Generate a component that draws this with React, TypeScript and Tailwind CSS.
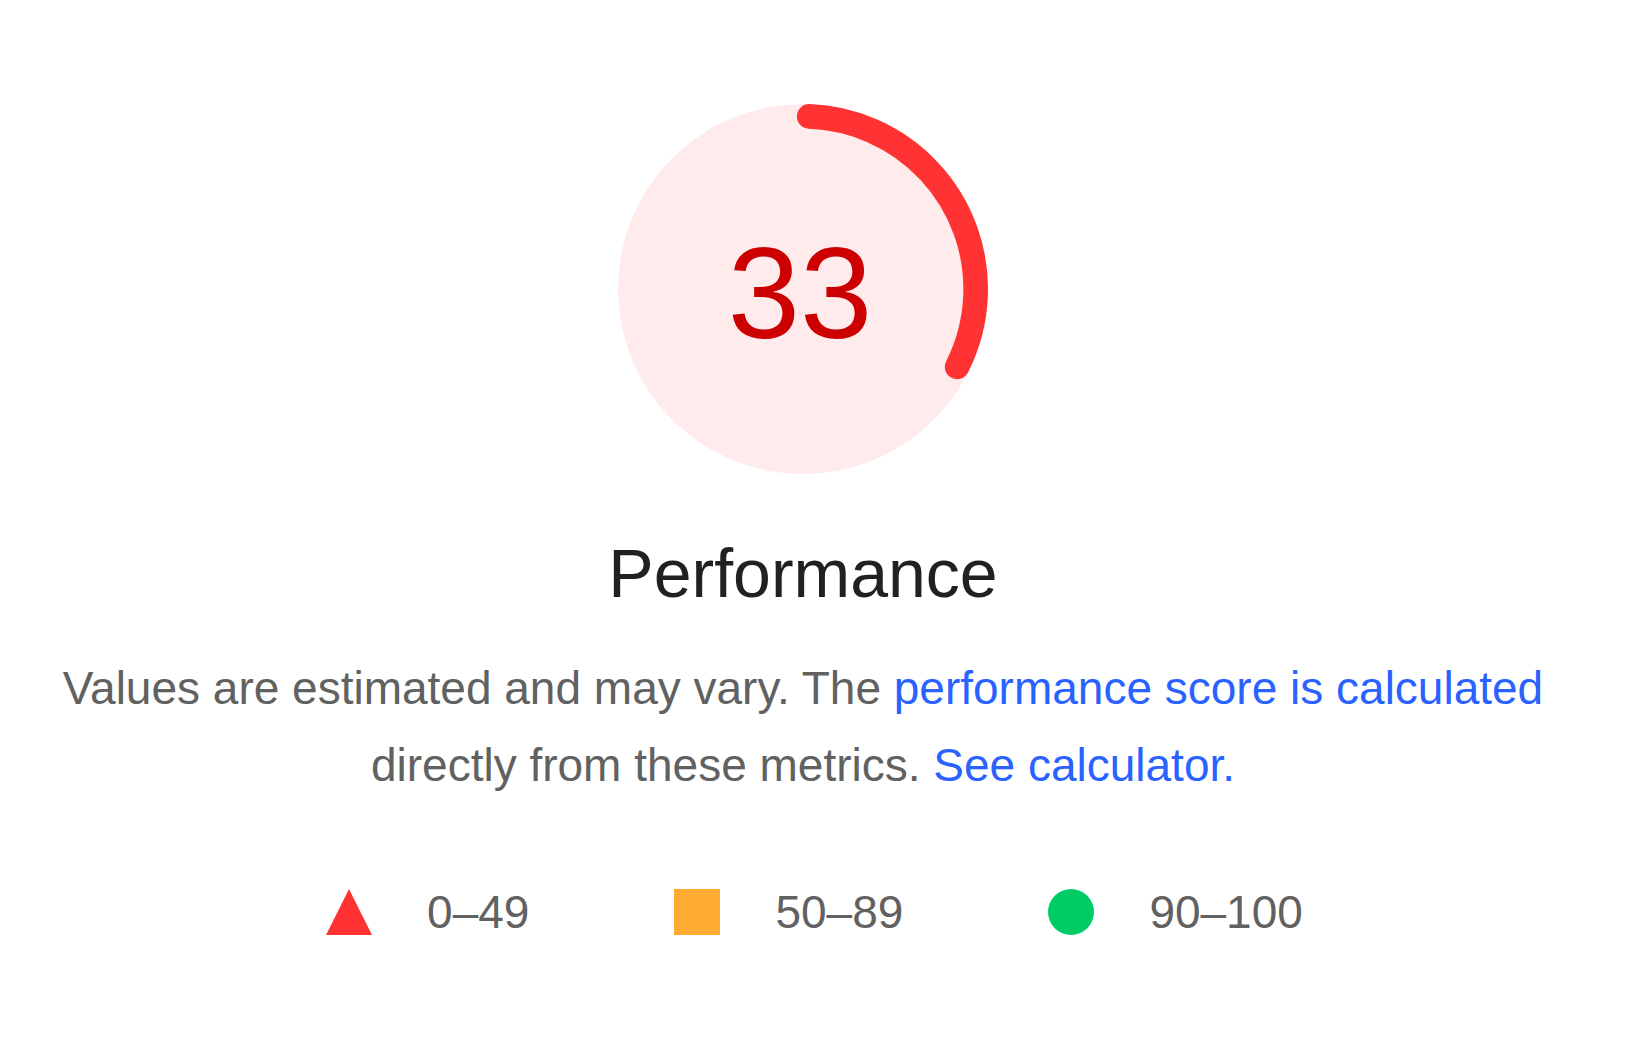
import React from 'react'

const FONT = { fontFamily: '"Liberation Sans", Arial, Helvetica, sans-serif' }

function Gauge({ score }: { score: number }) {
  const r = 56
  const circumference = 2 * Math.PI * r
  const stroke = 8
  const arcLength = Math.max((score / 100) * circumference - stroke / 2, 0)
  const rotate = -90 + ((0.25 * stroke) / circumference) * 360

  return (
    <div className="relative w-[370px] h-[370px]">
      <svg viewBox="0 0 120 120" className="w-full h-full">
        <circle cx="60" cy="60" r="60" fill="#ffebeb" />
        <circle
          cx="60"
          cy="60"
          r={r}
          fill="none"
          stroke="#ff3333"
          strokeWidth={stroke}
          strokeLinecap="round"
          strokeDasharray={`${arcLength} ${circumference}`}
          transform={`rotate(${rotate} 60 60)`}
        />
      </svg>
      <div className="absolute inset-0 flex items-center justify-center pt-[8px] pr-[6px] text-[130px] leading-none text-[#cc0000]">
        {score}
      </div>
    </div>
  )
}

function Legend() {
  return (
    <div className="flex items-center gap-[145px] ml-[23px] text-[46px] leading-none text-[#616161]">
      <div className="flex items-center gap-[55px]">
        <svg width="46" height="46" viewBox="0 0 46 46">
          <polygon points="23,0 46,46 0,46" fill="#ff3333" />
        </svg>
        <span>0–49</span>
      </div>
      <div className="flex items-center gap-[55px]">
        <div className="w-[46px] h-[46px] bg-[#ffaa33]" />
        <span>50–89</span>
      </div>
      <div className="flex items-center gap-[55px]">
        <div className="w-[46px] h-[46px] rounded-full bg-[#00cc66]" />
        <span>90–100</span>
      </div>
    </div>
  )
}

export default function App() {
  return (
    <div className="min-h-[1040px] bg-white" style={FONT}>
      <div className="w-[1606px] flex flex-col items-center pt-[104px]">
        <Gauge score={33} />

        <h2 className="mt-[65px] text-[68px] leading-none font-normal text-[#212121]">
          Performance
        </h2>

        <p className="mt-[43px] max-w-[1500px] text-center text-[46px] leading-[77px] text-[#616161]">
          Values are estimated and may vary. The{' '}
          <a href="#" className="text-[#2962ff]">
            performance score is calculated
          </a>{' '}
          directly from these metrics.{' '}
          <a href="#" className="text-[#2962ff]">
            See calculator.
          </a>
        </p>

        <div className="mt-[85px]">
          <Legend />
        </div>
      </div>
    </div>
  )
}
